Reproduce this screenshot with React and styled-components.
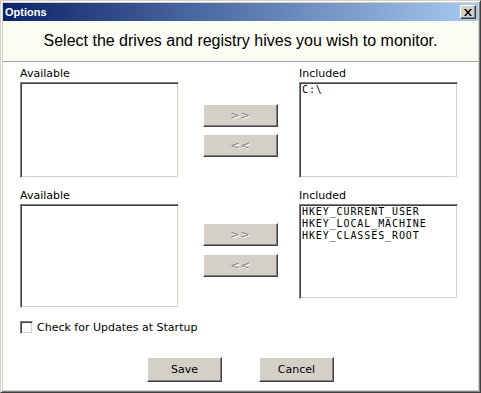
import React from "react";
import styled, { createGlobalStyle } from "styled-components";

const Global = createGlobalStyle`
  html, body { margin: 0; padding: 0; background: #d4d0c8; }
  * { box-sizing: border-box; }
`;

const Window = styled.div`
  width: 481px;
  height: 393px;
  display: flex;
  flex-direction: column;
  background: #d4d0c8;
  border: 1px solid;
  border-color: #d4d0c8 #404040 #404040 #d4d0c8;
  box-shadow: inset 1px 1px #ffffff, inset -1px -1px #808080;
  padding: 2px;
  font-family: "DejaVu Sans", sans-serif;
  font-size: 11px;
  color: #000;
`;

const TitleBar = styled.div`
  height: 18px;
  flex: none;
  display: flex;
  align-items: center;
  justify-content: space-between;
  padding: 0 2px 0 2px;
  background: linear-gradient(to right, #0a246a, #a6caf0);
`;

const Title = styled.span`
  font-family: "Liberation Sans", Arial, sans-serif;
  font-weight: bold;
  font-size: 11px;
  color: #fff;
  line-height: 13px;
`;

const CloseButton = styled.div`
  width: 16px;
  height: 14px;
  background: #d4d0c8;
  border: 1px solid;
  border-color: #ffffff #404040 #404040 #ffffff;
  box-shadow: inset -1px -1px #808080;
  display: flex;
  align-items: center;
  justify-content: center;
`;

const Header = styled.div`
  height: 41px;
  flex: none;
  background: #fcfcf4;
  border-bottom: 1px solid #a0a0a0;
  display: flex;
  align-items: center;
  justify-content: center;
  font-family: "Liberation Sans", Arial, sans-serif;
  font-size: 16px;
  color: #000;
`;

const Body = styled.div`
  flex: 1;
  background: #fff;
  padding: 5px 0 0 17px;
  display: flex;
  flex-direction: column;
`;

const Section = styled.div`
  display: grid;
  grid-template-columns: 159px 24px 75px 21px 159px;
  grid-template-rows: 13px auto;
  row-gap: 2px;
  margin-top: ${(p) => p.$top || 0}px;
`;

const Label = styled.div`
  line-height: 13px;
  white-space: nowrap;
  grid-column: ${(p) => p.$col};
`;

const ListBox = styled.div`
  grid-column: ${(p) => p.$col};
  align-self: start;
  height: ${(p) => p.$h}px;
  background: #fff;
  border: 1px solid;
  border-color: #808080 #ffffff #ffffff #808080;
  box-shadow: inset 1px 1px #404040, inset -1px -1px #d4d0c8;
  padding: 1px 2px;
  font-family: "DejaVu Sans Mono", monospace;
  font-size: 10px;
  letter-spacing: 0.9px;
  line-height: 12px;
`;

const Item = styled.div`
  white-space: nowrap;
`;

const MoveColumn = styled.div`
  grid-column: 3;
  align-self: ${(p) => p.$align || "center"};
  display: flex;
  flex-direction: column;
  gap: ${(p) => p.$gap}px;
  margin-top: ${(p) => p.$top || 0}px;
`;

const Button = styled.button`
  width: 75px;
  height: ${(p) => p.$h || 23}px;
  padding: 0;
  background: #d4d0c8;
  border: 1px solid;
  border-color: #ffffff #404040 #404040 #ffffff;
  box-shadow: inset -1px -1px #808080;
  font-family: "DejaVu Sans", sans-serif;
  font-size: 11px;
  color: ${(p) => (p.disabled ? "#808080" : "#000")};
  text-shadow: ${(p) => (p.disabled ? "1px 1px 0 #ffffff" : "none")};
  letter-spacing: ${(p) => (p.disabled ? "1px" : "0")};
  cursor: default;
`;

const CheckRow = styled.label`
  display: flex;
  align-items: center;
  gap: 4px;
  margin-top: 13px;
  line-height: 13px;
`;

const CheckBox = styled.span`
  width: 13px;
  height: 13px;
  flex: none;
  background: #fff;
  border: 1px solid;
  border-color: #808080 #ffffff #ffffff #808080;
  box-shadow: inset 1px 1px #404040, inset -1px -1px #d4d0c8;
`;

const Footer = styled.div`
  display: flex;
  justify-content: center;
  gap: 37px;
  margin-top: 23px;
  padding-right: 17px;
`;

export default function App() {
  return (
    <>
      <Global />
      <Window>
        <TitleBar>
          <Title>Options</Title>
          <CloseButton>
            <svg width="8" height="7" viewBox="0 0 8 7">
              <path d="M0 0h2l2 2.5L6 0h2L5 3.5 8 7H6L4 4.5 2 7H0l3-3.5z" fill="#000" />
            </svg>
          </CloseButton>
        </TitleBar>
        <Header>Select the drives and registry hives you wish to monitor.</Header>
        <Body>
          <Section>
            <Label $col={1}>Available</Label>
            <Label $col={5}>Included</Label>
            <ListBox $col={1} $h={96} />
            <MoveColumn $gap={7}>
              <Button disabled>&gt;&gt;</Button>
              <Button disabled>&lt;&lt;</Button>
            </MoveColumn>
            <ListBox $col={5} $h={96}>
              <Item>C:\</Item>
            </ListBox>
          </Section>
          <Section $top={11}>
            <Label $col={1}>Available</Label>
            <Label $col={5}>Included</Label>
            <ListBox $col={1} $h={104} />
            <MoveColumn $gap={8} $align="start" $top={19}>
              <Button disabled>&gt;&gt;</Button>
              <Button disabled>&lt;&lt;</Button>
            </MoveColumn>
            <ListBox $col={5} $h={95}>
              <Item>HKEY_CURRENT_USER</Item>
              <Item>HKEY_LOCAL_MACHINE</Item>
              <Item>HKEY_CLASSES_ROOT</Item>
            </ListBox>
          </Section>
          <CheckRow>
            <CheckBox />
            Check for Updates at Startup
          </CheckRow>
          <Footer>
            <Button $h={25}>Save</Button>
            <Button $h={25}>Cancel</Button>
          </Footer>
        </Body>
      </Window>
    </>
  );
}
